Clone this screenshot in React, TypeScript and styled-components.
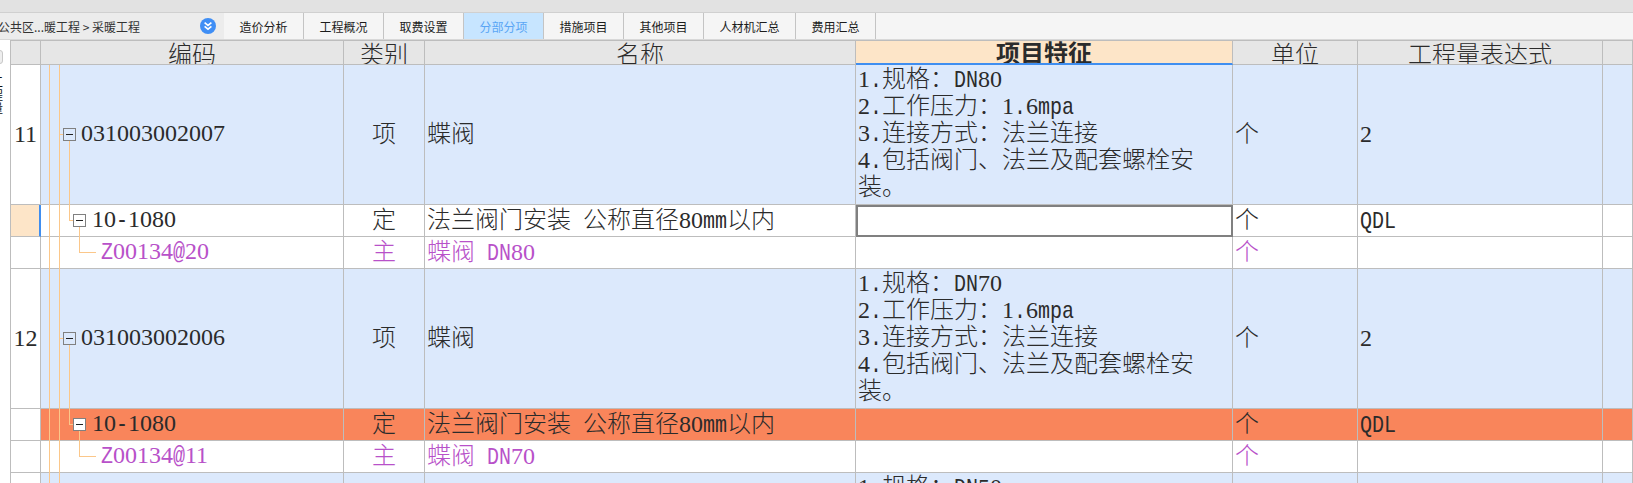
import React from 'react';
import styled, { createGlobalStyle } from 'styled-components';

const GlobalStyle = createGlobalStyle`
  html, body {
    margin: 0;
    padding: 0;
    height: 483px;
    overflow: hidden;
    background: #fff;
  }
`;

const cjk = '"Noto Sans CJK SC", sans-serif';
const gridCols = '30px 303px 81px 431px 377px 125px 245px 1fr';
const lineColor = '#bdbdbd';
const treeColor = '#fbc78a';

const Page = styled.div`
  width: 1633px;
  height: 483px;
  overflow: hidden;
  display: flex;
  flex-direction: column;
  color: #2b2b2b;
`;

const TopStrip = styled.div`
  height: 12px;
  flex: none;
  background: #e2e2e2;
  border-bottom: 1px solid #d0d0d0;
`;

const TabBar = styled.div`
  height: 26px;
  flex: none;
  display: flex;
  background: #f5f5f5;
  border-bottom: 1px solid #d8d8d8;
`;

const Crumb = styled.div`
  width: 224px;
  flex: none;
  box-sizing: border-box;
  display: flex;
  align-items: center;
  justify-content: space-between;
  padding: 0 8px 0 0;
  background: #ececec;
  overflow: hidden;
  font: 12px ${cjk};
  color: #333;
`;

const CrumbText = styled.span`
  margin-left: -2px;
  white-space: pre;
`;

const Tab = styled.div<{ $active?: boolean; $w: number }>`
  width: ${(p) => p.$w}px;
  box-sizing: border-box;
  display: flex;
  align-items: center;
  justify-content: center;
  border-right: 1px solid #c4c4c4;
  font: 12px ${cjk};
  background: ${(p) => (p.$active ? '#c7e5ff' : 'transparent')};
  color: ${(p) => (p.$active ? '#5aa5f5' : '#1c1c1c')};
`;

const Body = styled.div`
  flex: 1;
  display: flex;
  min-height: 0;
`;

const SideStrip = styled.div`
  width: 10px;
  flex: none;
  overflow: hidden;
  background: #fff;
  padding-top: 10px;
`;

const SideButton = styled.div`
  width: 14px;
  height: 14px;
  margin-left: -11px;
  box-sizing: border-box;
  border: 1px solid #c8c8c8;
  border-radius: 3px;
  background: #eee;
`;

const SideLabel = styled.div`
  width: 12px;
  margin: 11px 0 0 -9px;
  font: 12px/13px ${cjk};
  color: #111;
`;

const Grid = styled.div`
  flex: 1;
  min-width: 0;
  overflow: hidden;
  border-left: 1px solid ${lineColor};
  border-top: 1px solid ${lineColor};
`;

const Row = styled.div<{ $h: number }>`
  display: grid;
  grid-template-columns: ${gridCols};
  height: ${(p) => p.$h}px;
`;

type Tone = 'blue' | 'white' | 'orange';
const toneBg: Record<Tone, string> = { blue: '#dce9fc', white: '#fff', orange: '#f9855b' };

const Cell = styled.div<{ $tone: Tone; $purple?: boolean; $center?: boolean }>`
  position: relative;
  box-sizing: border-box;
  min-width: 0;
  display: flex;
  align-items: center;
  justify-content: ${(p) => (p.$center ? 'center' : 'flex-start')};
  padding-left: ${(p) => (p.$center ? 0 : 2)}px;
  background: ${(p) => toneBg[p.$tone]};
  color: ${(p) => (p.$purple ? '#b851c9' : 'inherit')};
  border-right: 1px solid ${lineColor};
  border-bottom: 1px solid ${lineColor};
  font: 300 24px/27px ${cjk};
  white-space: pre;
`;

const CellText = styled.span`
  display: block;
  margin-top: -3px;
`;

// cells with only CJK have a shorter line box than the mixed ones
const CjkText = styled(CellText)`
  margin-top: -7px;
`;

const NumCell = styled(Cell)<{ $current?: boolean }>`
  background: ${(p) => (p.$current ? '#fde5c8' : '#fff')};
  border-right: ${(p) => (p.$current ? '2px solid #3f8ef0' : `1px solid ${lineColor}`)};
`;

const HeadCell = styled.div<{ $current?: boolean }>`
  box-sizing: border-box;
  min-width: 0;
  display: flex;
  align-items: center;
  justify-content: center;
  background: ${(p) => (p.$current ? '#fde5c8' : '#e6e6e6')};
  border-right: 1px solid ${lineColor};
  border-bottom: ${(p) => (p.$current ? '2px solid #3f8ef0' : `1px solid ${lineColor}`)};
  font: ${(p) => (p.$current ? 700 : 300)} 24px/24px ${cjk};
  overflow: hidden;
`;

const FeatureCell = styled(Cell)`
  display: block;
  padding: 0 0 0 2px;
`;

const FeatureLine = styled.div`
  height: 27px;

  &:first-child {
    margin-top: -2px;
  }
`;

const EditCell = styled(Cell)`
  border: 2px solid #808080;
`;

const CodeText = styled.span<{ $indent: number }>`
  position: absolute;
  left: ${(p) => p.$indent}px;
  top: calc(50% - 3px);
  transform: translateY(-50%);
`;

// digits: Liberation Serif is already 12px wide at 24px
const Digits = styled.span`
  font-family: "Liberation Serif", serif;
  font-size: 24px;
  font-weight: 400;
`;

// other half width latin: a 24px mono squeezed into 12px per character
const LatinBox = styled.span<{ $n: number }>`
  display: inline-block;
  width: ${(p) => p.$n * 12}px;
  white-space: pre;
`;

const LatinGlyphs = styled.span`
  display: inline-block;
  font-family: "Liberation Mono", monospace;
  font-size: 24px;
  font-weight: 400;
  transform: scaleX(0.8333);
  transform-origin: 0 50%;
`;

const Latin = ({ children }: { children: string }) => (
  <>
    {children.split(/(\d+)/).map((part, i) =>
      i % 2 ? (
        <Digits key={i}>{part}</Digits>
      ) : part ? (
        <LatinBox key={i} $n={part.length}>
          <LatinGlyphs>{part}</LatinGlyphs>
        </LatinBox>
      ) : null
    )}
  </>
);

/* tree connectors lie over the code cell */
const TreeV = styled.i<{ $x: number; $top: string; $bottom: string }>`
  position: absolute;
  left: ${(p) => p.$x}px;
  top: ${(p) => p.$top};
  bottom: ${(p) => p.$bottom};
  width: 1px;
  background: ${treeColor};
`;

const TreeH = styled.i<{ $x: number; $w: number }>`
  position: absolute;
  left: ${(p) => p.$x}px;
  top: calc(50% - 1px);
  width: ${(p) => p.$w}px;
  height: 1px;
  background: ${treeColor};
`;

const Toggle = styled.b<{ $x: number; $bright?: boolean }>`
  position: absolute;
  left: ${(p) => p.$x}px;
  top: calc(50% - 7px);
  width: 13px;
  height: 13px;
  box-sizing: border-box;
  border: 1px solid #808080;
  background: ${(p) => (p.$bright ? '#fff' : 'transparent')};

  &::after {
    content: '';
    position: absolute;
    left: 2px;
    right: 2px;
    top: 5px;
    height: 1px;
    background: #222;
  }
`;

const Txt = ({ children }: { children: string }) => (
  <>
    {children.split(/([\x00-\x7f]+)/).map((part, i) =>
      i % 2 ? <Latin key={i}>{part}</Latin> : part
    )}
  </>
);

const DoubleDown = () => (
  <svg width="16" height="16" viewBox="0 0 16 16">
    <circle cx="8" cy="8" r="8" fill="#3f8ef5" />
    <path d="M4.6 4.6 8 7.4l3.4-2.8M4.6 8.4 8 11.2l3.4-2.8" fill="none" stroke="#fff" strokeWidth="1.6" />
  </svg>
);

const tabs = [
  { label: '造价分析', w: 80 },
  { label: '工程概况', w: 80 },
  { label: '取费设置', w: 80 },
  { label: '分部分项', w: 80, active: true },
  { label: '措施项目', w: 80 },
  { label: '其他项目', w: 80 },
  { label: '人材机汇总', w: 92 },
  { label: '费用汇总', w: 80 },
];

const heads = ['', '编码', '类别', '名称', '项目特征', '单位', '工程量表达式', ''];

const Guides = () => (
  <>
    <TreeV $x={8} $top="0" $bottom="-1px" />
    <TreeV $x={18} $top="0" $bottom="-1px" />
  </>
);

const ItemRow = ({ num, code, lines }: { num: string; code: string; lines: string[] }) => (
  <Row $h={140}>
    <NumCell $tone="white" $center>
      <CellText><Latin>{num}</Latin></CellText>
    </NumCell>
    <Cell $tone="blue">
      <Guides />
      <TreeH $x={19} $w={3} />
      <TreeV $x={28} $top="calc(50% + 6px)" $bottom="-1px" />
      <Toggle $x={22} />
      <CodeText $indent={40}><Latin>{code}</Latin></CodeText>
    </Cell>
    <Cell $tone="blue" $center><CjkText>项</CjkText></Cell>
    <Cell $tone="blue"><CjkText>蝶阀</CjkText></Cell>
    <FeatureCell $tone="blue">
      {lines.map((line) => (
        <FeatureLine key={line}><Txt>{line}</Txt></FeatureLine>
      ))}
    </FeatureCell>
    <Cell $tone="blue"><CjkText>个</CjkText></Cell>
    <Cell $tone="blue"><CellText><Latin>2</Latin></CellText></Cell>
    <Cell $tone="blue" />
  </Row>
);

const QuotaRow = ({ tone, current, editing }: { tone: Tone; current?: boolean; editing?: boolean }) => (
  <Row $h={32}>
    <NumCell $tone="white" $current={current} />
    <Cell $tone={tone}>
      <Guides />
      <TreeV $x={28} $top="0" $bottom="50%" />
      <TreeH $x={28} $w={4} />
      <TreeV $x={38} $top="calc(50% + 6px)" $bottom="-1px" />
      <Toggle $x={32} $bright={tone === 'orange'} />
      <CodeText $indent={51}><Latin>10-1080</Latin></CodeText>
    </Cell>
    <Cell $tone={tone} $center><CjkText>定</CjkText></Cell>
    <Cell $tone={tone}><CellText><Txt>法兰阀门安装 公称直径80mm以内</Txt></CellText></Cell>
    {editing ? <EditCell $tone="white" /> : <Cell $tone={tone} />}
    <Cell $tone={tone}><CjkText>个</CjkText></Cell>
    <Cell $tone={tone}><CellText><Latin>QDL</Latin></CellText></Cell>
    <Cell $tone={tone} />
  </Row>
);

const MaterialRow = ({ code, name }: { code: string; name: string }) => (
  <Row $h={32}>
    <NumCell $tone="white" />
    <Cell $tone="white" $purple>
      <Guides />
      <TreeV $x={38} $top="0" $bottom="50%" />
      <TreeH $x={38} $w={17} />
      <CodeText $indent={60}><Latin>{code}</Latin></CodeText>
    </Cell>
    <Cell $tone="white" $purple $center><CjkText>主</CjkText></Cell>
    <Cell $tone="white" $purple><CellText><Txt>{name}</Txt></CellText></Cell>
    <Cell $tone="white" />
    <Cell $tone="white" $purple><CjkText>个</CjkText></Cell>
    <Cell $tone="white" />
    <Cell $tone="white" />
  </Row>
);

const featureLines = (dn: string) => [
  `1.规格\uFF1ADN${dn}`,
  '2.工作压力\uFF1A1.6mpa',
  '3.连接方式\uFF1A法兰连接',
  '4.包括阀门、法兰及配套螺栓安',
  '装。',
];

export default function App() {
  return (
    <Page>
      <GlobalStyle />
      <TopStrip />
      <TabBar>
        <Crumb>
          <CrumbText>公共区...暖工程 &gt; 采暖工程</CrumbText>
          <DoubleDown />
        </Crumb>
        {tabs.map((t) => (
          <Tab key={t.label} $w={t.w} $active={t.active}>{t.label}</Tab>
        ))}
      </TabBar>
      <Body>
        <SideStrip>
          <SideButton />
          <SideLabel>工程量</SideLabel>
        </SideStrip>
        <Grid>
          <Row $h={24}>
            {heads.map((h, i) => (
              <HeadCell key={i} $current={h === '项目特征'}>{h}</HeadCell>
            ))}
          </Row>
          <ItemRow num="11" code="031003002007" lines={featureLines('80')} />
          <QuotaRow tone="white" current editing />
          <MaterialRow code="Z00134@20" name="蝶阀 DN80" />
          <ItemRow num="12" code="031003002006" lines={featureLines('70')} />
          <QuotaRow tone="orange" />
          <MaterialRow code="Z00134@11" name="蝶阀 DN70" />
          <ItemRow num="" code="" lines={featureLines('50')} />
        </Grid>
      </Body>
    </Page>
  );
}
